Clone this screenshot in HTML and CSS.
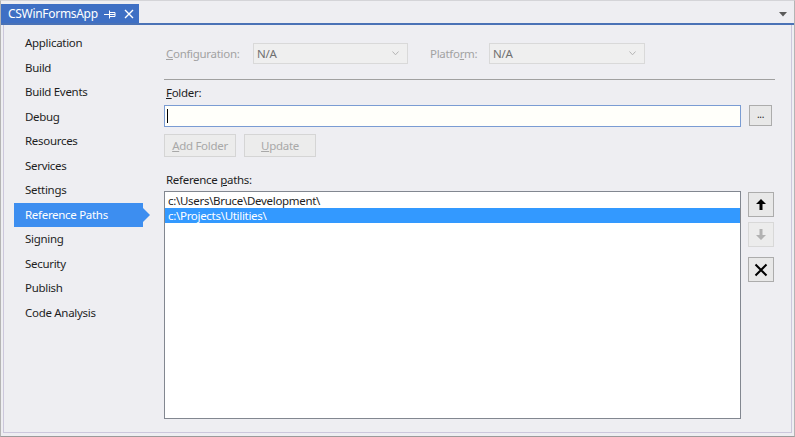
FILE: index.html
```html
<!DOCTYPE html>
<html>
<head>
<meta charset="utf-8">
<link rel="stylesheet" href="styles.css">
</head>
<body>
<div class="window">
  <div class="tabstrip">
    <div class="tab">
      <span class="tab-title">CSWinFormsApp</span>
      <svg class="pin" width="12" height="10" viewBox="0 0 12 10"><path d="M0 5.5H5M5.5 1.5V9.5M5.5 3.5H11V7.5H5.5M5.5 5.5H11" stroke="#fff" stroke-width="1" fill="none"/></svg>
      <svg class="close" width="10" height="10" viewBox="0 0 10 10"><path d="M1 1L9 9M9 1L1 9" stroke="#fff" stroke-width="1.4" fill="none"/></svg>
    </div>
    <div class="tab-spacer"></div>
    <svg class="drop" width="8" height="5" viewBox="0 0 8 5"><path d="M0 0H8L4 4.5Z" fill="#5a5a5a"/></svg>
  </div>
  <div class="frame">
    <nav class="sidebar">
      <div class="nav-item">Application</div>
      <div class="nav-item">Build</div>
      <div class="nav-item">Build Events</div>
      <div class="nav-item">Debug</div>
      <div class="nav-item">Resources</div>
      <div class="nav-item">Services</div>
      <div class="nav-item">Settings</div>
      <div class="nav-item selected">Reference Paths</div>
      <div class="nav-item">Signing</div>
      <div class="nav-item">Security</div>
      <div class="nav-item">Publish</div>
      <div class="nav-item">Code Analysis</div>
    </nav>
    <main class="content">
      <div class="config-row">
        <span class="dim-label"><u>C</u>onfiguration:</span>
        <div class="combo"><span>N/A</span><svg width="7" height="5" viewBox="0 0 7 5"><path d="M0.5 0.5L3.5 3.8L6.5 0.5" stroke="#b4b4b4" fill="none"/></svg></div>
        <span class="dim-label plat">Platfo<u>r</u>m:</span>
        <div class="combo"><span>N/A</span><svg width="7" height="5" viewBox="0 0 7 5"><path d="M0.5 0.5L3.5 3.8L6.5 0.5" stroke="#b4b4b4" fill="none"/></svg></div>
      </div>
      <div class="rule"></div>
      <div class="label folder-label"><u>F</u>older:</div>
      <div class="input-row">
        <div class="input"><span class="caret"></span></div>
        <div class="btn browse">...</div>
      </div>
      <div class="btn-row">
        <div class="btn disabled"><u>A</u>dd Folder</div>
        <div class="btn disabled"><u>U</u>pdate</div>
      </div>
      <div class="label paths-label">Reference <u>p</u>aths:</div>
      <div class="list-row">
        <div class="listbox">
          <div class="list-item">c:\Users\Bruce\Development\</div>
          <div class="list-item sel">c:\Projects\Utilities\</div>
        </div>
        <div class="side-btns">
          <div class="sq-btn"><svg width="10" height="11" viewBox="0 0 10 11"><path d="M5 0L10 5H6.5V11H3.5V5H0Z" fill="#000"/></svg></div>
          <div class="sq-btn disabled"><svg width="10" height="11" viewBox="0 0 10 11"><path d="M5 11L10 6H6.5V0H3.5V6H0Z" fill="#b2b2b2"/></svg></div>
          <div class="sq-btn del"><svg width="14" height="14" viewBox="0 0 14 14"><path d="M1.5 1.5L12.5 12.5M12.5 1.5L1.5 12.5" stroke="#000" stroke-width="2" fill="none"/></svg></div>
        </div>
      </div>
    </main>
  </div>
</div>
</body>
</html>
```

FILE: styles.css
```css
* { box-sizing: border-box; }
html, body { margin: 0; padding: 0; }
body {
  background: #eeeef2;
  font-family: "Noto Sans", "DejaVu Sans", sans-serif;
  font-size: 11.5px;
  letter-spacing: -0.3px;
  color: #1e1e1e;
}
.window {
  width: 795px;
  height: 437px;
  display: flex;
  flex-direction: column;
  border-bottom: 1px solid #9a9a9a;
  border-left: 1px solid #b4b4b4;
  border-right: 1px solid #b4b4b4;
  border-top: 1px solid #d4d4d8;
}
.tabstrip {
  height: 24px;
  display: flex;
  align-items: flex-end;
  border-bottom: 2px solid #4a72b6;
  flex: none;
}
.tab {
  height: 19px;
  width: 138px;
  background: #3e6fc4;
  display: flex;
  align-items: center;
  padding-left: 7px;
  color: #fff;
}
.tab-title { font-size: 12px; line-height: 19px; }
.pin { margin-left: 6px; }
.close { margin-left: 8px; }
.tab-spacer { flex: 1; }
.drop { margin: 0 7px 6px 0; }

.frame {
  flex: 1;
  display: flex;
  margin: 0 2px 3px 2px;
  border-left: 1px solid #ccc7dc;
  border-right: 1px solid #ccc7dc;
  border-bottom: 1px solid #ccc7dc;
}
.sidebar {
  width: 160px;
  flex: none;
  padding: 6px 0 0 10px;
}
.nav-item {
  height: 24.5px;
  line-height: 24.5px;
  padding-left: 11px;
  width: 129px;
  position: relative;
  white-space: nowrap;
}
.nav-item.selected {
  background: #3d8ef0;
  color: #fff;
}
.nav-item.selected::after {
  content: "";
  position: absolute;
  left: 129px;
  top: 5px;
  border-left: 7px solid #3d8ef0;
  border-top: 7px solid transparent;
  border-bottom: 7px solid transparent;
}
.content {
  flex: 1;
  padding: 18px 0 0 0;
  display: flex;
  flex-direction: column;
}
.config-row {
  display: grid;
  grid-template-columns: 89px 155px 22px 59px 156px;
  height: 21px;
  align-items: center;
}
.config-row .dim-label { padding-left: 2px; color: #a2a2a2; }
.config-row .dim-label.plat { grid-column: 4; padding-left: 0; }
.combo {
  height: 21px;
  border: 1px solid #d9d9d9;
  background: #efefef;
  color: #6f6f6f;
  display: flex;
  align-items: center;
  justify-content: space-between;
  padding: 0 8px 0 3px;
}
.rule {
  width: 611px;
  height: 1px;
  background: #a0a0a0;
  margin-top: 15px;
}
.label { line-height: 16px; color: #1e1e1e; padding-left: 2px; }
.folder-label { margin-top: 5px; }
.input-row {
  display: flex;
  gap: 8px;
  margin-top: 4px;
  align-items: flex-start;
}
.input {
  width: 577px;
  height: 22px;
  background: #fffffa;
  border: 1px solid #7a9cd3;
  padding: 3px 0 0 2px;
}
.caret { display: block; width: 1px; height: 14px; background: #000; }
.btn {
  height: 23px;
  border: 1px solid #acacac;
  background: #e8e8e8;
  display: flex;
  align-items: center;
  justify-content: center;
  color: #1e1e1e;
}
.btn.browse { width: 23px; height: 21px; font-size: 10px; padding-bottom: 3px; }
.btn-row { display: flex; gap: 8px; margin-top: 7px; }
.btn-row .btn { width: 72px; }
.btn.disabled { border-color: #d5d5d5; background: #ececec; color: #a8a8a8; }
.paths-label { margin-top: 15px; }
.list-row { display: flex; gap: 7px; margin-top: 3px; }
.listbox {
  width: 577px;
  height: 228px;
  background: #fff;
  border: 1px solid #828790;
  padding: 1px 0 0 0;
}
.list-item { height: 15px; line-height: 15px; padding-left: 3px; white-space: nowrap; }
.list-item.sel { background: #3399ff; color: #fff; }
.side-btns { display: flex; flex-direction: column; padding-top: 1px; }
.sq-btn {
  width: 26px;
  height: 25px;
  border: 1px solid #acacac;
  background: #e8e8e8;
  display: flex;
  align-items: center;
  justify-content: center;
}
.sq-btn + .sq-btn { margin-top: 5px; }
.sq-btn.disabled { border-color: #d8d8d8; background: #ececec; }
.sq-btn.del { margin-top: 10px; }
```
